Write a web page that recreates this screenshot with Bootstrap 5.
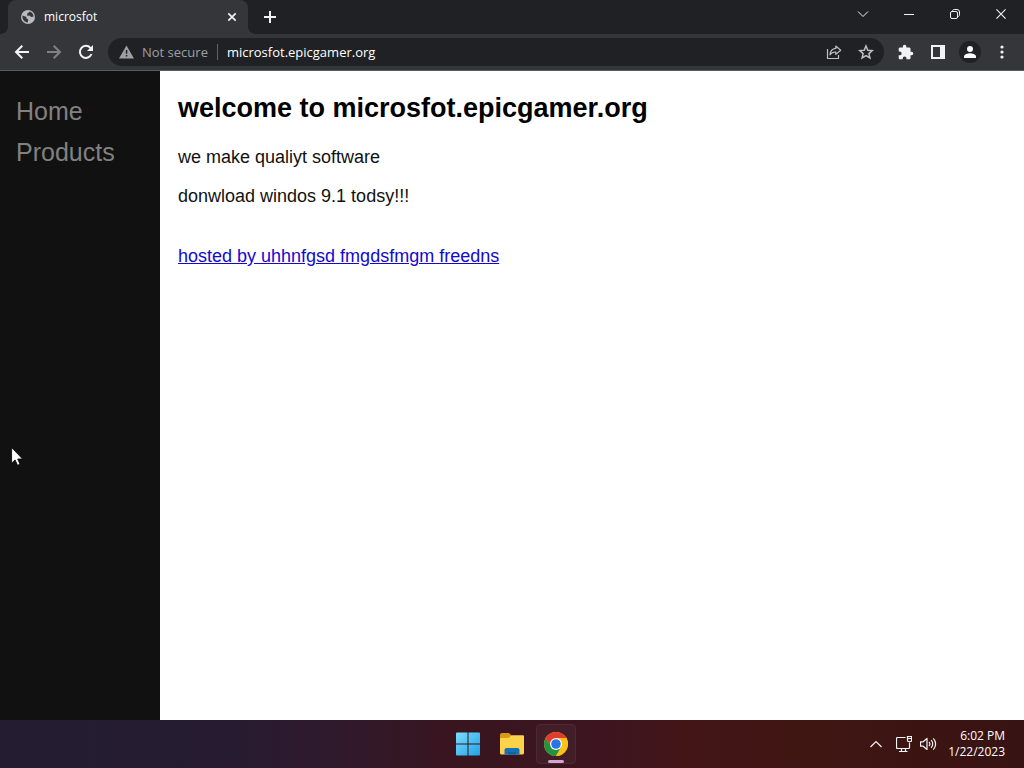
<!DOCTYPE html>
<html lang="en">
<head>
<meta charset="utf-8">
<meta name="viewport" content="width=device-width, initial-scale=1">
<title>microsfot</title>
<link rel="stylesheet" href="https://cdn.jsdelivr.net/npm/bootstrap@5.3.0/dist/css/bootstrap.min.css">
<style>
body { font-family: "Open Sans", sans-serif; font-size: 12px; line-height: 16px; }
svg { display: block; flex: none; }
.icon-btn { padding: 0; border: 0; border-radius: 4px; color: #f1f3f4; width: 32px; height: 32px; display: flex; align-items: center; justify-content: center; flex: none; }
.icon-btn:hover { color: #fff; background: #4a4b4f; }
.icon-btn.dim, .icon-btn.dim:disabled { color: #7f8184; border: 0; opacity: 1; }
.icon-btn.soft { color: #bdc1c6; }

.tab-strip { background: #202124; height: 34px; padding-left: 8px; }
.browser-tab { position: relative; width: 240px; background: #35363a; color: #fff; border-radius: 8px 8px 0 0; padding: 0 6px 0 12px; }
.browser-tab::before, .browser-tab::after { content: ""; position: absolute; bottom: 0; width: 8px; height: 8px; }
.browser-tab::before { left: -8px; background: radial-gradient(circle at 0 0, transparent 8px, #35363a 8px); }
.browser-tab::after { right: -8px; background: radial-gradient(circle at 100% 0, transparent 8px, #35363a 8px); }
.tab-close { width: 20px; height: 20px; }
.new-tab { width: 28px; height: 28px; margin: 3px 0 0 8px; }
.window-btn { width: 46px; height: 28px; border-radius: 0; }

.toolbar { background: #35363a; height: 37px; padding: 0 6px; border-bottom: 1px solid #5b5b5e; }
.omnibox { background: #202124; height: 28px; border-radius: 14px; padding: 0 2px 0 11px; margin: 0 6px; font-size: 13px; }
.site-status { color: #9aa0a6; gap: 8px; padding-right: 9px; border-right: 1px solid #5f6368; }
.omnibox input { background: transparent; border: 0; outline: 0; color: #fff; padding: 0 0 0 9px; min-width: 0; height: 20px; }
.omnibox .icon-btn { height: 28px; }

.page-view { font-family: "Liberation Sans", Arial, sans-serif; background: #fff; color: #111; font-size: 18px; line-height: 21px; }
.side-menu { width: 160px; background: #111; padding-top: 20px; }
.side-menu a { padding: 6px 8px 6px 16px; font-size: 25px; line-height: 29px; color: #818181; }
.side-menu a:hover { color: #f1f1f1; }
.site-main { padding: 22px 18px; }
.site-main h2 { font-size: 27px; line-height: 31px; font-weight: 700; color: #000; margin: 0 0 23px; }
.site-main p { margin: 0 0 18px; }
.site-main a { color: #1408d0; }

.taskbar { height: 48px; color: #fff; background: linear-gradient(to right, #231d31, #261b31 22%, #30192c 33%, #38151f 44%, #3d1521 58%, #431517 67%, #3f1612 80%, #381313); display: grid; grid-template-columns: minmax(0, 1fr) auto minmax(0, 1fr); }
.app-btn { width: 40px; height: 40px; position: relative; }
.app-btn.running { background: #421e28; border: 1px solid #4e2a33; }
.app-btn.running::after { content: ""; position: absolute; left: 11px; bottom: 0; width: 16px; height: 3px; border-radius: 2px; background: #d6a5cb; }
.tray { padding-right: 19px; }
.tray .icon-btn { width: 24px; }
.pointer { position: absolute; left: 11px; top: 447px; pointer-events: none; }
</style>
</head>
<body class="vh-100 d-flex flex-column overflow-hidden">

<header>
  <div class="tab-strip d-flex">
    <div class="browser-tab d-flex align-items-center">
      <svg width="16" height="16" viewBox="0 0 16 16"><circle cx="8" cy="8" r="7" fill="#b9bbbe"/><path fill="#35363a" d="M2.500 6.600C3.500 7 4.300 7.600 5.300 7.500c1.200-.1 1.300.8.900 1.600.3 1 1.800.7 2 1.700.1.900-.4 1.500-.3 2.600C5 13.600 2 11 2.500 6.600zM9.600 2.500c-.3 1-1.200 1.300-2 1.600-.5.700.2 1.200-.4 1.700-.5.500.3 1.200 1.100.9.900-.3 1.700.2 2.200.8.800.8 1.700.1 3 .2.200-2.400-1.500-4.600-3.900-5.200z"/></svg>
      <span class="ms-2 flex-grow-1">microsfot</span>
      <button class="btn icon-btn tab-close" aria-label="Close tab"><svg width="10" height="10" viewBox="0 0 10 10" fill="none" stroke="currentColor" stroke-width="1.700"><path d="M1.300 1.300l7.400 7.400M8.700 1.300l-7.400 7.400"/></svg></button>
    </div>
    <button class="btn icon-btn new-tab" aria-label="New tab"><svg width="12" height="12" viewBox="0 0 12 12" fill="none" stroke="currentColor" stroke-width="2"><path d="M6 0v12M0 6h12"/></svg></button>
    <div class="ms-auto d-flex">
      <button class="btn icon-btn window-btn" aria-label="Search tabs"><svg width="12" height="8" viewBox="0 0 12 8" fill="none" stroke="currentColor"><path d="M1 1.500l5 5 5-5"/></svg></button>
      <button class="btn icon-btn window-btn" aria-label="Minimize"><svg width="10" height="10" viewBox="0 0 10 10"><path stroke="currentColor" d="M0 5.500h10"/></svg></button>
      <button class="btn icon-btn window-btn" aria-label="Restore"><svg width="10" height="10" viewBox="0 0 10 10" fill="none" stroke="currentColor"><rect x=".5" y="2.500" width="7" height="7" rx="1.500"/><path d="M2.500 2.300C2.500 1.200 3.200.5 4.200.5H7A2.500 2.500 0 0 1 9.500 3v2.800c0 1-.6 1.700-1.700 1.700"/></svg></button>
      <button class="btn icon-btn window-btn" aria-label="Close"><svg width="10" height="10" viewBox="0 0 11 11" fill="none" stroke="currentColor" stroke-width="1.200"><path d="M.5.5l10 10M10.500.5l-10 10"/></svg></button>
    </div>
  </div>

  <div class="toolbar d-flex align-items-center">
    <button class="btn icon-btn" aria-label="Back"><svg width="16" height="16" viewBox="0 0 16 16" fill="none" stroke="currentColor" stroke-width="2"><path d="M15 8H2.500M8.300 1.700L2 8l6.300 6.300"/></svg></button>
    <button class="btn icon-btn dim" aria-label="Forward" disabled><svg width="16" height="16" viewBox="0 0 16 16" fill="none" stroke="currentColor" stroke-width="2"><path d="M1 8h12.500M7.700 1.700L14 8l-6.300 6.300"/></svg></button>
    <button class="btn icon-btn" aria-label="Reload"><svg width="16" height="16" viewBox="0 0 16 16"><path fill="none" stroke="currentColor" stroke-width="2" d="M13.500 10A6 6 0 1 1 12.400 3.900L14 5.500"/><path fill="currentColor" d="M15 1v6H9z"/></svg></button>
    <div class="omnibox d-flex align-items-center flex-grow-1">
      <label class="site-status d-flex align-items-center text-nowrap" for="address">
        <svg width="15" height="14" viewBox="0 0 15 14"><path fill="#9aa0a6" d="M7.500.5L15 13.500H0z"/><path fill="#202124" d="M6.800 5h1.500v3.800H6.800zM6.800 10h1.500v1.600H6.800z"/></svg>
        Not secure
      </label>
      <input id="address" class="flex-grow-1" type="text" value="microsfot.epicgamer.org">
      <button class="btn icon-btn soft" aria-label="Share"><svg width="16" height="16" viewBox="0 0 16 16" fill="none" stroke="currentColor" stroke-width="1.200" stroke-linejoin="round"><path d="M1.500 5v9.500h11V11"/><path d="M9.800 2l4.900 4.200-4.900 4.200V8C7 7.900 5.300 8.700 4 10.800 4.200 7.200 6.200 4.800 9.800 4.400z"/></svg></button>
      <button class="btn icon-btn soft" aria-label="Bookmark"><svg width="16" height="16" viewBox="0 0 16 16" fill="none" stroke="currentColor" stroke-width="1.500"><path d="M8 2l1.800 4.200 4.500.4-3.400 3 1 4.400L8 11.600 4.100 14l1-4.400-3.400-3 4.500-.4z"/></svg></button>
    </div>
    <button class="btn icon-btn" aria-label="Extensions"><svg width="16" height="16" viewBox="1 0 23 23"><path fill="currentColor" d="M20.500 11H19V7c0-1.100-.9-2-2-2h-4V3.500a2.500 2.500 0 0 0-5 0V5H4c-1.100 0-2 .9-2 2v3.800h1.500a2.700 2.700 0 0 1 0 5.400H2V20c0 1.100.9 2 2 2h3.800v-1.500a2.700 2.700 0 0 1 5.400 0V22H17c1.100 0 2-.9 2-2v-4h1.500a2.500 2.500 0 0 0 0-5z"/></svg></button>
    <button class="btn icon-btn" aria-label="Side panel"><svg width="14" height="14" viewBox="0 0 14 14"><path fill="currentColor" fill-rule="evenodd" d="M0 0h14v14H0zM2 2v10h7V2z"/></svg></button>
    <button class="btn icon-btn" aria-label="Profile"><svg width="22" height="22" viewBox="0 0 22 22"><circle cx="11" cy="11" r="11" fill="#202124"/><circle cx="11" cy="8" r="3" fill="#f8f9fa"/><path fill="#f8f9fa" d="M5 17v-1.500c0-2.300 4-3.300 6-3.300s6 1 6 3.300V17z"/></svg></button>
    <button class="btn icon-btn" aria-label="Menu"><svg width="4" height="14" viewBox="0 0 4 14" fill="currentColor"><circle cx="2" cy="2" r="1.600"/><circle cx="2" cy="7" r="1.600"/><circle cx="2" cy="12" r="1.600"/></svg></button>
  </div>
</header>

<div class="page-view d-flex flex-grow-1 overflow-hidden">
  <nav class="side-menu flex-shrink-0">
    <a class="d-block text-decoration-none" href="#home">Home</a>
    <a class="d-block text-decoration-none" href="#products">Products</a>
  </nav>
  <main class="site-main flex-grow-1 overflow-auto">
    <h2>welcome to microsfot.epicgamer.org</h2>
    <p>we make qualiyt software</p>
    <p>donwload windos 9.1 todsy!!!</p>
    <br>
    <a href="#freedns">hosted by uhhnfgsd fmgdsfmgm freedns</a>
  </main>
</div>

<footer class="taskbar align-items-center">
  <div></div>
  <div class="d-flex gap-1">
    <button class="btn icon-btn app-btn" aria-label="Start"><svg width="24" height="24" viewBox="0 0 24 24"><defs><linearGradient id="win" x2="1" y2="1"><stop stop-color="#7bddfb"/><stop offset="1" stop-color="#1fa2e8"/></linearGradient></defs><path fill="url(#win)" d="M1 .5h10.500V11.500H0V1.500a1 1 0 0 1 1-1zM12.500.5H23a1 1 0 0 1 1 1v10H12.500zM0 12.500h11.500v11H1a1 1 0 0 1-1-1zM12.500 12.500H24v10a1 1 0 0 1-1 1H12.500z"/></svg></button>
    <button class="btn icon-btn app-btn" aria-label="File Explorer"><svg width="24" height="22" viewBox="0 0 24 22"><path fill="#d79b16" d="M0 2a2 2 0 0 1 2-2h7l2.500 2.500L9 6H0z"/><path fill="#fbd34b" d="M0 5h8.500l3-2.800H23a1 1 0 0 1 1 1V20a1.500 1.500 0 0 1-1.500 1.500h-21A1.500 1.500 0 0 1 0 20z"/><path fill="#1672b8" d="M4.500 21.500V17a2 2 0 0 1 2-2h11a2 2 0 0 1 2 2v4.500z"/><path fill="#11659f" d="M8 19h8v2.500H8z"/></svg></button>
    <button class="btn icon-btn app-btn running" aria-label="Chrome"><svg width="24" height="24" viewBox="0 0 24 24"><circle cx="12" cy="12" r="12" fill="#fbc116"/><path fill="#e33b2e" d="M1.610 6A12 12 0 0 1 22.390 6H12l-5.200 9z"/><path fill="#229342" d="M1.610 6A12 12 0 0 0 12 24l5.200-9L12 12H5.100z"/><path fill="#fbc116" d="M12 24A12 12 0 0 0 22.390 6H12l5.200 9z"/><circle cx="12" cy="12" r="6" fill="#fff"/><circle cx="12" cy="12" r="4.800" fill="#2876e4"/></svg></button>
  </div>
  <div class="tray d-flex align-items-center justify-content-end">
    <button class="btn icon-btn" aria-label="Hidden icons"><svg width="12" height="8" viewBox="0 0 12 8" fill="none" stroke="currentColor" stroke-width="1.200"><path d="M.5 7L6 1.500 11.500 7"/></svg></button>
    <button class="btn icon-btn ms-1" aria-label="Network"><svg width="16" height="16" viewBox="0 0 16 16" fill="none" stroke="currentColor" stroke-width="1.200"><path d="M9.500 1.500h-8a1 1 0 0 0-1 1v9a1 1 0 0 0 1 1h11a1 1 0 0 0 1-1V6.500M3 15.500h8.500M5.500 12.500v3M9.500 12.500v3M11.500.5h4v4a1 1 0 0 1-1 1h-2a1 1 0 0 1-1-1zM11.500 2.500h4"/></svg></button>
    <button class="btn icon-btn" aria-label="Volume"><svg width="17" height="14" viewBox="0 0 17 14" fill="none" stroke="currentColor" stroke-width="1.200" stroke-linejoin="round"><path d="M.5 4.800h2.700L7 1.500v11L3.200 9.200H.5zM9 5a3 3 0 0 1 0 4M11.200 3.200a5.500 5.500 0 0 1 0 7.600M13.300 1.300a8.200 8.200 0 0 1 0 11.400"/></svg></button>
    <div class="ms-2 text-end text-nowrap">6:02 PM<br>1/22/2023</div>
  </div>
</footer>

<svg class="pointer" width="13" height="20" viewBox="0 0 13 20"><path fill="#fff" stroke="#000" stroke-width=".8" d="M.6.6v15.600l3.500-3.300 2.400 5.400 2.500-1.100-2.300-5.200h4.900z"/></svg>

<script src="https://cdn.jsdelivr.net/npm/bootstrap@5.3.0/dist/js/bootstrap.bundle.min.js"></script>
</body>
</html>
